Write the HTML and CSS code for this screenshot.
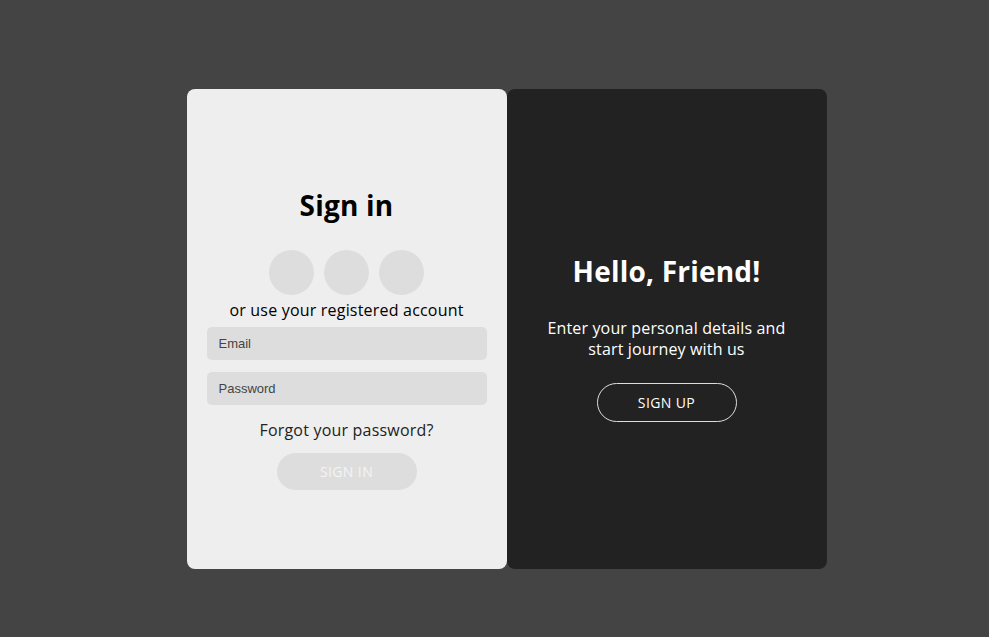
FILE: index.html
```html
<!DOCTYPE html>
<html lang="en">
<head>
<meta charset="utf-8">
<title>Sign in</title>
<link rel="stylesheet" href="styles.css">
</head>
<body>
<div class="page">
  <div class="container">
    <form class="panel panel-signin">
      <h1 class="title">Sign in</h1>
      <div class="socials">
        <span class="social"></span>
        <span class="social"></span>
        <span class="social"></span>
      </div>
      <p class="hint">or use your registered account</p>
      <input class="field" type="email" placeholder="Email">
      <input class="field" type="password" placeholder="Password">
      <a class="forgot" href="#">Forgot your password?</a>
      <button class="btn btn-signin" type="button">SIGN IN</button>
    </form>
    <div class="panel panel-overlay">
      <h1 class="title title-light">Hello, Friend!</h1>
      <p class="intro">Enter your personal details and start journey with us</p>
      <button class="btn btn-ghost" type="button">SIGN UP</button>
    </div>
  </div>
</div>
</body>
</html>
```

FILE: styles.css
```css
* { box-sizing: border-box; }
html, body { margin: 0; height: 100%; }
body {
  background: #444;
  font-family: "Open Sans", "Noto Sans", sans-serif;
}
.page {
  height: 637px;
  display: flex;
  justify-content: center;
  padding-top: 89px;
  padding-left: 24px;
}
.container {
  display: flex;
  width: 640px;
  height: 480px;
}
.panel {
  width: 320px;
  height: 480px;
  border-radius: 8px;
  display: flex;
  flex-direction: column;
  align-items: center;
  justify-content: flex-start;
  margin: 0;
}
.panel-signin {
  background: #eee;
  padding: 98px 20px 0;
}
.panel-overlay {
  background: #222;
  padding: 164px 30px 0;
}
.title {
  margin: 0;
  font-size: 28px;
  line-height: 37px;
  font-weight: 700;
  color: #000;
  letter-spacing: 0.2px;
}
.title-light { color: #fff; }
.socials {
  display: flex;
  gap: 10px;
  margin-top: 26px;
}
.social {
  width: 45px;
  height: 45px;
  border-radius: 50%;
  background: #ddd;
}
.hint {
  margin: 5px 0 0;
  font-size: 16px;
  line-height: 21px;
  color: #000;
  letter-spacing: 0.2px;
}
.field {
  width: 280px;
  height: 33px;
  border: none;
  border-radius: 5px;
  background: #ddd;
  padding: 0 12px;
  font-family: "Liberation Sans", Arial, sans-serif;
  font-size: 13px;
  color: #333;
  margin-top: 6px;
  outline: none;
}
.field + .field { margin-top: 12px; }
.field::placeholder { color: #444; }
.forgot {
  margin-top: 15px;
  font-size: 16px;
  line-height: 21px;
  color: #222;
  text-decoration: none;
  letter-spacing: 0.2px;
}
.btn {
  width: 140px;
  border-radius: 20px;
  font-family: "Open Sans", "Noto Sans", sans-serif;
  font-size: 14px;
  letter-spacing: 0.4px;
  cursor: pointer;
}
.btn-signin {
  height: 37px;
  margin-top: 12px;
  border: none;
  background: #ddd;
  color: #f4f4f4;
}
.btn-ghost {
  height: 39px;
  margin-top: 23px;
  border: 1px solid #ddd;
  background: transparent;
  color: #fff;
}
.intro {
  margin: 28px 0 0;
  font-size: 16px;
  line-height: 21px;
  color: #fff;
  text-align: center;
  letter-spacing: 0.15px;
}
```
